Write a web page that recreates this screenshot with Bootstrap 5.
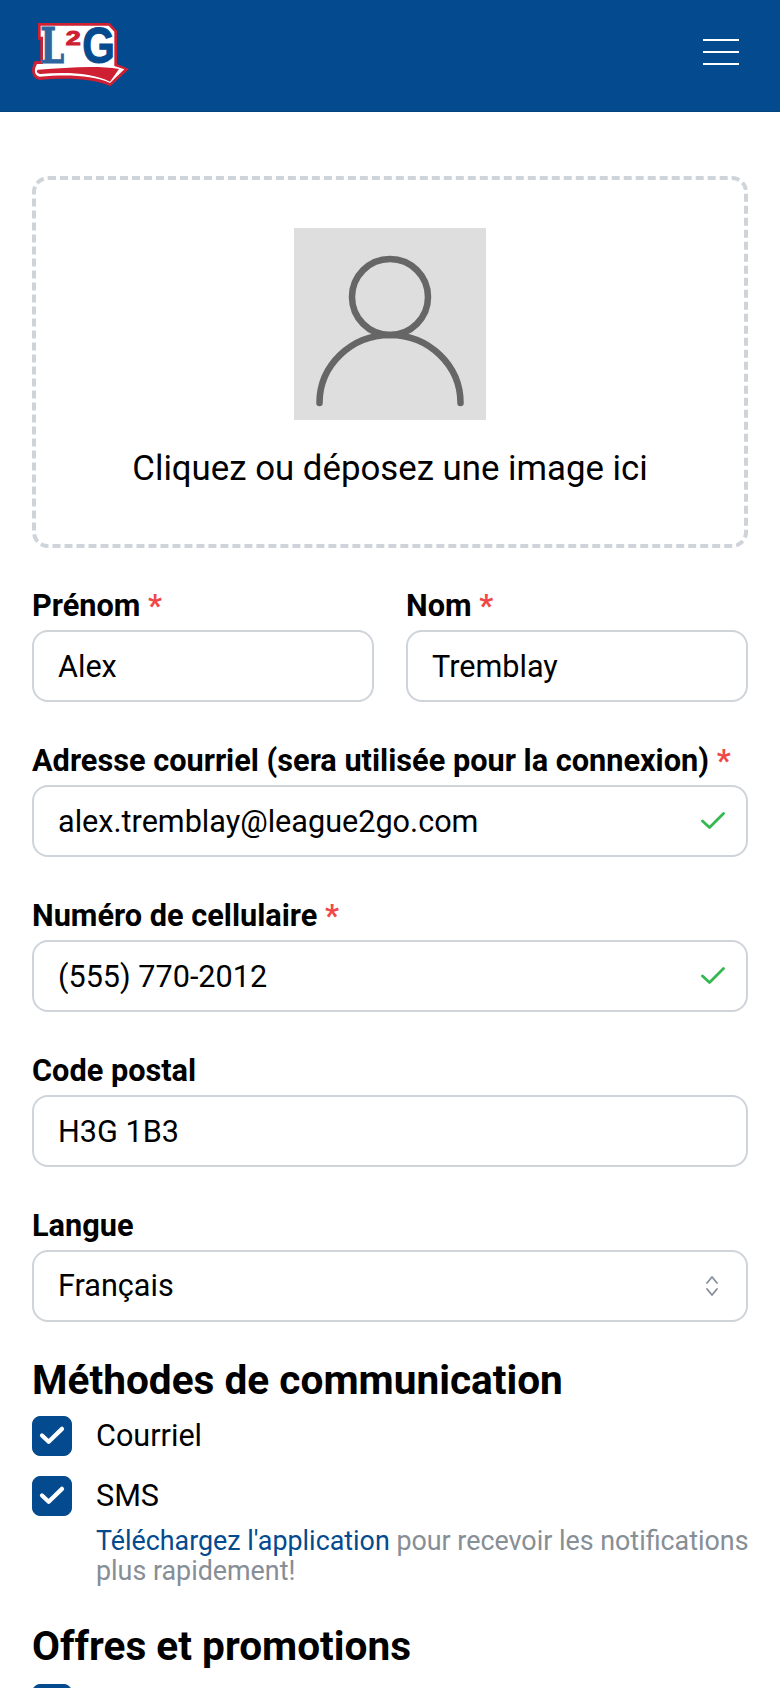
<!DOCTYPE html>
<html lang="fr">
<head>
<meta charset="utf-8">
<title>Profil</title>
<link rel="stylesheet" href="https://cdn.jsdelivr.net/npm/bootstrap@5.3.0/dist/css/bootstrap.min.css">
<style>
html,body{height:100%;overflow:hidden}
body{font-family:Roboto,"Liberation Sans",sans-serif;color:#000;background:#fff}
.top-bar{height:112px;background:#034a8e;padding:0 32px;border-bottom:1px solid #03447f;align-items:center}
.top-bar .navbar-brand{padding:0;margin:0;height:64px;margin-top:-1px}
.logo-svg{display:block;overflow:visible}
.burger{padding:0;border:0;width:36px;display:flex;flex-direction:column;gap:10px;border-radius:0;margin:0 9px 7px 0}
.burger span{display:block;height:2px;background:#fff}
.page-form{padding:64px 32px 0}
.drop-zone{border:4px dashed #ced4da;border-radius:16px;height:372px;margin-bottom:38px;padding-top:48px}
.avatar-box{width:192px;height:192px;background:#dedede}
.drop-text{font-size:34.800px;line-height:48px;margin-top:24px}
.field-label{font-size:30.700px;font-weight:700;line-height:40px;margin-bottom:4px;display:block}
.req{color:#f04848}
.field-input.form-control,.field-input.form-select{height:72px;font-size:30.600px;line-height:40px;padding:0 24px;border:2px solid #ced4da;border-radius:16px;color:#000;background-color:#fff}
.field-check.form-control{background-image:url("data:image/svg+xml,%3Csvg xmlns='http://www.w3.org/2000/svg' viewBox='0 0 24 18'%3E%3Cpath d='M1.5 9l7 6.5L22.500 1.500' fill='none' stroke='%2334b84f' stroke-width='2.800' stroke-linecap='round' stroke-linejoin='round'/%3E%3C/svg%3E");background-repeat:no-repeat;background-position:right 21px center;background-size:24px 18px}
.field-input.form-select{background-image:url("data:image/svg+xml,%3Csvg xmlns='http://www.w3.org/2000/svg' viewBox='0 0 14 24'%3E%3Cpath d='M2 9l5-6 5 6M2 15l5 6 5-6' fill='none' stroke='%23868e96' stroke-width='1.800' stroke-linecap='round' stroke-linejoin='round'/%3E%3C/svg%3E");background-repeat:no-repeat;background-position:right 27px center;background-size:14px 24px}
.field-gap{margin-bottom:39px}
.field-row{--bs-gutter-x:32px;margin-bottom:39px}
.sect-title{font-size:40.600px;font-weight:700;line-height:48px;margin:-5px 0 12px}
.opt-row{display:flex;gap:24px;align-items:center;margin:0 0 20px;padding:0;min-height:40px}
.opt-row .form-check-input{width:40px;height:40px;margin:0;float:none;border-radius:8px;flex:none;background-color:#034a8e;border-color:#034a8e;background-size:100% 100%;background-image:url("data:image/svg+xml,%3Csvg xmlns='http://www.w3.org/2000/svg' viewBox='0 0 40 40'%3E%3Cpath d='M9.500 19.500l7 6.500 14-13.500' fill='none' stroke='%23fff' stroke-width='4.500' stroke-linecap='round' stroke-linejoin='round'/%3E%3C/svg%3E")}
.opt-row .form-check-label{font-size:30.600px;line-height:40px}
.opt-help{font-size:26.850px;line-height:30px;color:#868e96;margin:-10px -8px 0 64px}
.opt-help a{color:#034a8e;text-decoration:none}
.sect-title.sect-next{margin:36px 0 14px}
</style>
</head>
<body>
<nav class="navbar top-bar">
  <a class="navbar-brand" href="#" aria-label="L2G">
    <svg class="logo-svg" width="97" height="64" viewBox="97 72 291 192">
      <path d="M115 72H330L352 95V195L388 210L332 262C280 238 200 236 120 243C98 240 90 215 105 186H122V122H115Z" fill="#ce1f33"/>
      <path d="M123 80H327L344 98V201L374 211L331 252C280 228 200 226 120 233C106 231 100 215 112 195H130V113H123Z" fill="#fff"/>
      <text x="122" y="191" font-family="'DejaVu Serif',serif" font-weight="700" font-size="145" textLength="72" lengthAdjust="spacingAndGlyphs" fill="#2f659f" stroke="#2f659f" stroke-width="3">L</text>
      <text x="198" y="139" font-family="'Liberation Sans',sans-serif" font-weight="700" font-size="58" textLength="45" lengthAdjust="spacingAndGlyphs" fill="#ce1f33" stroke="#ce1f33" stroke-width="3">2</text>
      <text x="248" y="192" font-family="'Liberation Sans',sans-serif" font-weight="700" font-size="148" textLength="98" lengthAdjust="spacingAndGlyphs" fill="#034a8e" stroke="#034a8e" stroke-width="3">G</text>
      <path d="M116 212C200 206 290 198 358 210L331 248C280 222 200 218 122 225C112 224 108 214 116 212Z" fill="#ce1f33"/>
    </svg>
  </a>
  <button class="navbar-toggler burger" type="button" aria-label="Menu"><span></span><span></span><span></span></button>
</nav>
<form class="page-form">
  <div class="drop-zone d-flex flex-column align-items-center">
    <div class="avatar-box">
      <svg width="192" height="192" viewBox="0 0 192 192">
        <circle cx="96" cy="69" r="38" fill="none" stroke="#666" stroke-width="6.500"/>
        <path d="M25.500 175A70.500 68 0 0 1 166.500 175" fill="none" stroke="#666" stroke-width="6.500" stroke-linecap="round"/>
      </svg>
    </div>
    <div class="drop-text">Cliquez ou déposez une image ici</div>
  </div>
  <div class="row field-row">
    <div class="col-6">
      <label class="field-label" for="f1">Prénom <span class="req">*</span></label>
      <input id="f1" class="form-control field-input" value="Alex">
    </div>
    <div class="col-6">
      <label class="field-label" for="f2">Nom <span class="req">*</span></label>
      <input id="f2" class="form-control field-input" value="Tremblay">
    </div>
  </div>
  <div class="field-gap">
    <label class="field-label" for="f3">Adresse courriel (sera utilisée pour la connexion) <span class="req">*</span></label>
    <input id="f3" class="form-control field-input field-check" value="alex.tremblay@league2go.com">
  </div>
  <div class="field-gap">
    <label class="field-label" for="f4">Numéro de cellulaire <span class="req">*</span></label>
    <input id="f4" class="form-control field-input field-check" value="(555) 770-2012">
  </div>
  <div class="field-gap">
    <label class="field-label" for="f5">Code postal</label>
    <input id="f5" class="form-control field-input" value="H3G 1B3">
  </div>
  <div class="field-gap">
    <label class="field-label" for="f6">Langue</label>
    <select id="f6" class="form-select field-input"><option>Français</option></select>
  </div>
  <h2 class="sect-title">Méthodes de communication</h2>
  <div class="form-check opt-row">
    <input class="form-check-input" type="checkbox" id="c1" checked>
    <label class="form-check-label" for="c1">Courriel</label>
  </div>
  <div class="form-check opt-row">
    <input class="form-check-input" type="checkbox" id="c2" checked>
    <label class="form-check-label" for="c2">SMS</label>
  </div>
  <p class="opt-help"><a href="#">Téléchargez l'application</a> pour recevoir les notifications plus rapidement!</p>
  <h2 class="sect-title sect-next">Offres et promotions</h2>
  <div class="form-check opt-row">
    <input class="form-check-input" type="checkbox" id="c3" checked aria-label="Option">
  </div>
</form>
</body>
</html>
